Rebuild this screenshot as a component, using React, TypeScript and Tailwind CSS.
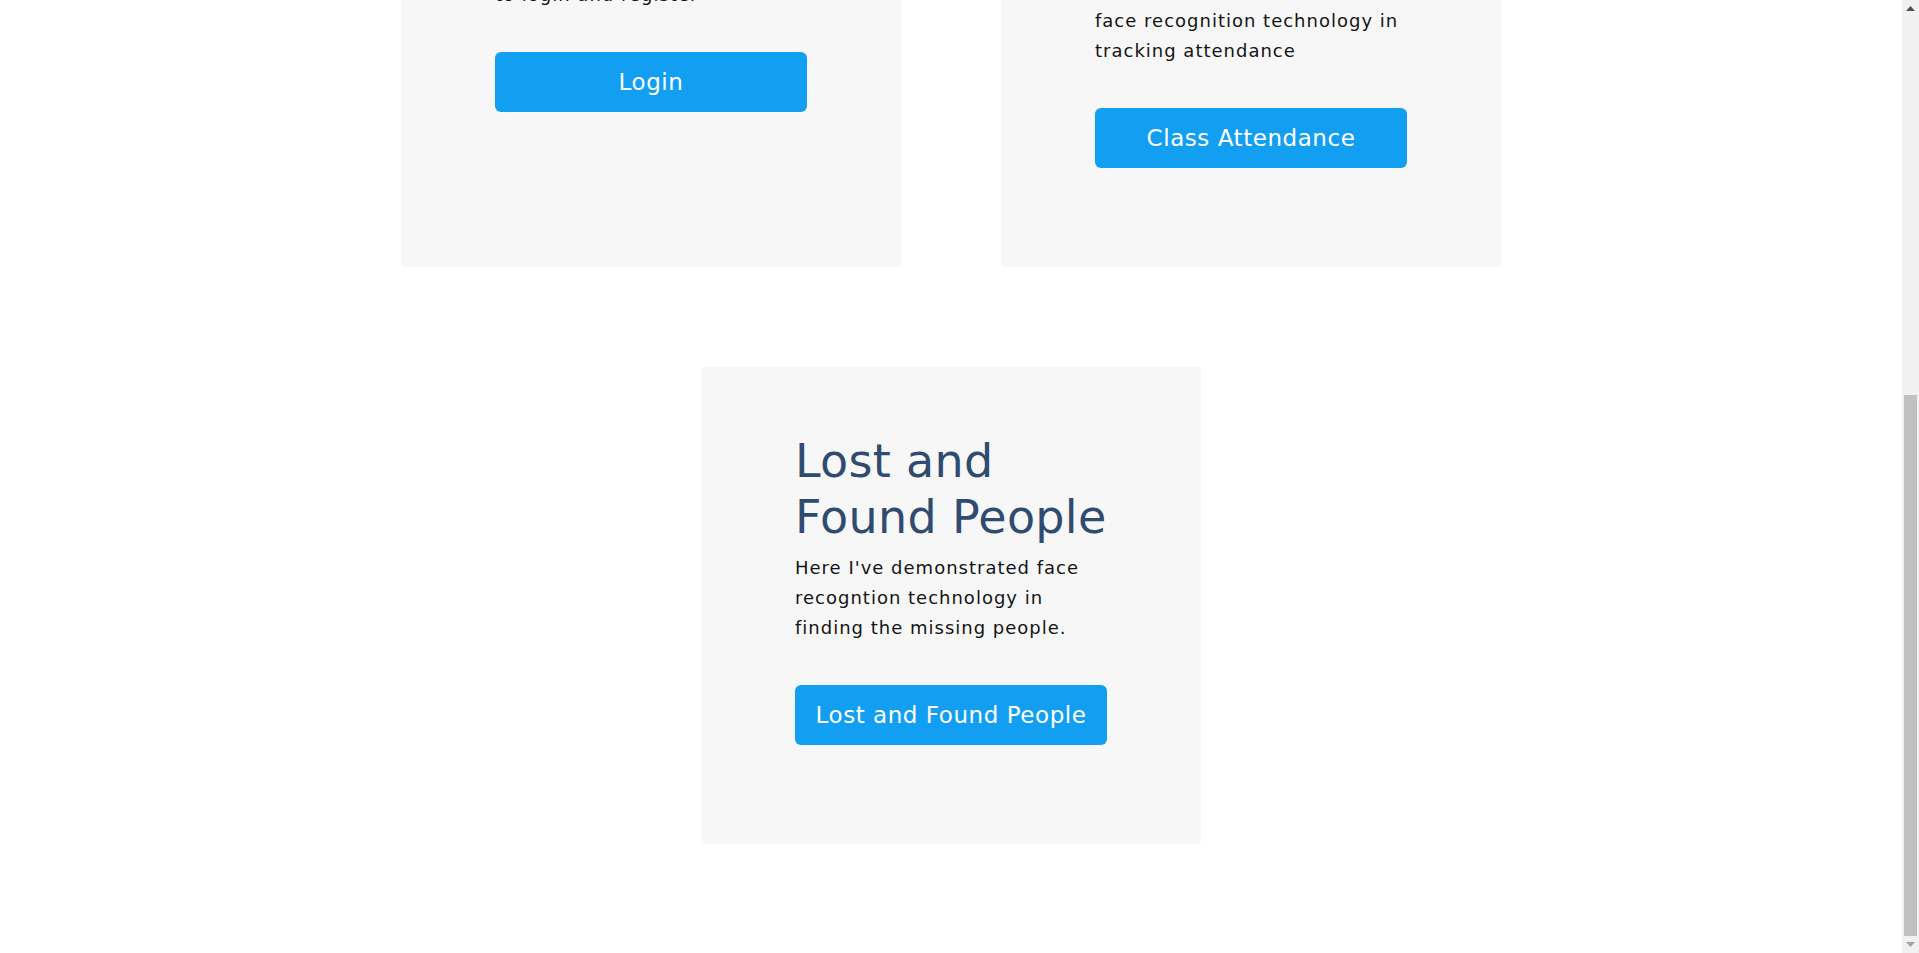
import React from "react";

const font = { fontFamily: '"DejaVu Sans", "Open Sans", sans-serif' };

function Card({
  heading,
  lines,
  button,
}: {
  heading: string[];
  lines: string[];
  button: string;
}) {
  return (
    <div className="w-[500px] rounded-[4px] bg-[#f7f7f7] pt-[66px] pb-[99px]">
      <div className="mx-auto w-[312px]">
        <h2 className="text-[46px] leading-[56px] font-normal tracking-[0.3px] text-[#2f4b70] whitespace-nowrap">
          {heading.map((h, i) => (
            <div key={i}>{h}</div>
          ))}
        </h2>
        <p className="mt-[8px] text-[18px] leading-[30px] tracking-[1px] text-[#141414] whitespace-nowrap">
          {lines.map((l, i) => (
            <span key={i} className="block">
              {l}
            </span>
          ))}
        </p>
        <button className="mt-[42px] flex h-[60px] w-[312px] items-center justify-center rounded-[6px] bg-[#139ff1] text-[23px] tracking-[0.55px] text-white">
          {button}
        </button>
      </div>
    </div>
  );
}

export default function App() {
  return (
    <div className="flex h-[953px] w-full overflow-hidden bg-white" style={font}>
      <main className="flex-1 overflow-hidden">
        <div className="mt-[-210px] flex flex-col items-center gap-[100px]">
          <div className="flex items-stretch gap-[100px]">
            <Card
              heading={["Login"]}
              lines={[
                "Here you will be able",
                "to use our features, need",
                "to login and register",
              ]}
              button="Login"
            />
            <Card
              heading={["Class", "Attendance"]}
              lines={[
                "Here I've demonstrated",
                "face recognition technology in",
                "tracking attendance",
              ]}
              button="Class Attendance"
            />
          </div>
          <Card
            heading={["Lost and", "Found People"]}
            lines={[
              "Here I've demonstrated face",
              "recogntion technology in",
              "finding the missing people.",
            ]}
            button="Lost and Found People"
          />
        </div>
      </main>
      <div className="flex w-[17px] flex-col bg-[#f1f1f1]">
        <div className="flex h-[17px] items-center justify-center">
          <svg width="9" height="5" viewBox="0 0 9 5">
            <path d="M4.5 0 L9 5 L0 5 Z" fill="#505050" />
          </svg>
        </div>
        <div className="flex flex-1 flex-col pl-[2px] pr-[2px]">
          <div className="h-[378px]" />
          <div className="h-[541px] bg-[#c1c1c1]" />
        </div>
        <div className="flex h-[17px] items-center justify-center">
          <svg width="9" height="5" viewBox="0 0 9 5">
            <path d="M0 0 L9 0 L4.5 5 Z" fill="#a3a3a3" />
          </svg>
        </div>
      </div>
    </div>
  );
}
